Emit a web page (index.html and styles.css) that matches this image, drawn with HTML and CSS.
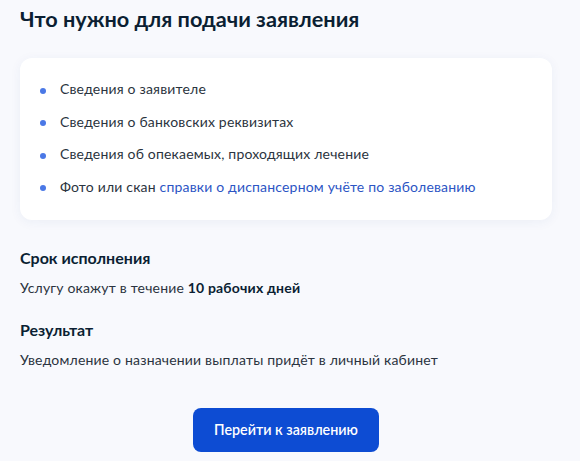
FILE: index.html
```html
<!DOCTYPE html>
<html lang="ru">
<head>
<meta charset="utf-8">
<link rel="stylesheet" href="styles.css">
</head>
<body>
<main class="page">
  <h2 class="title">Что нужно для подачи заявления</h2>
  <section class="card">
    <ul class="list">
      <li>Сведения о заявителе</li>
      <li>Сведения о банковских реквизитах</li>
      <li>Сведения об опекаемых, проходящих лечение</li>
      <li>Фото или скан <a class="link" href="#">справки о диспансерном учёте по заболеванию</a></li>
    </ul>
  </section>
  <section class="block block-first">
    <h3 class="subtitle">Срок исполнения</h3>
    <p class="text">Услугу окажут в течение <b>10 рабочих дней</b></p>
  </section>
  <section class="block">
    <h3 class="subtitle">Результат</h3>
    <p class="text">Уведомление о назначении выплаты придёт в личный кабинет</p>
  </section>
  <div class="actions">
    <button class="btn" type="button">Перейти к заявлению</button>
  </div>
</main>
</body>
</html>
```

FILE: styles.css
```css
html, body {
  margin: 0;
  padding: 0;
  background: #f8f9fd;
}
body {
  font-family: Lato, "Noto Sans", sans-serif;
  color: #0b1f33;
}
.page {
  padding: 0 28px 0 20px;
}
.title {
  margin: 0;
  padding-top: 5px;
  font-size: 21.7px;
  line-height: 28px;
  font-weight: 700;
  color: #0b1f33;
}
.card {
  margin-top: 25px;
  background: #fff;
  border-radius: 12px;
  box-shadow: 0 2px 12px rgba(30, 60, 140, 0.06);
  padding: 21px 20px 23px 20px;
}
.list {
  list-style: none;
  margin: 0;
  padding: 0;
  display: flex;
  flex-direction: column;
  gap: 12.5px;
}
.list li {
  position: relative;
  padding-left: 20px;
  font-size: 14px;
  line-height: 20px;
  letter-spacing: 0.18px;
  color: #2b3440;
}
.list li::before {
  content: "";
  position: absolute;
  left: 0;
  top: 8.8px;
  width: 6px;
  height: 6px;
  border-radius: 50%;
  background: #4a78e6;
}
.link {
  color: #2c55c4;
  text-decoration: none;
}
.block {
  margin-top: 22px;
}
.block-first {
  margin-top: 28px;
}
.subtitle {
  margin: 0;
  font-size: 16px;
  line-height: 20px;
  font-weight: 700;
  color: #0b1f33;
}
.text {
  margin: 10px 0 0;
  font-size: 14px;
  line-height: 20px;
  letter-spacing: 0.18px;
  color: #2b3440;
}
.text b {
  font-weight: 700;
  color: #0b1f33;
}
.actions {
  display: flex;
  justify-content: center;
  margin-top: 38px;
}
.btn {
  width: 186px;
  height: 44px;
  border: 0;
  border-radius: 8px;
  background: #0d4cd3;
  color: #fff;
  font-family: Lato, "Noto Sans", sans-serif;
  font-size: 14.3px;
  font-weight: 600;
}
```
